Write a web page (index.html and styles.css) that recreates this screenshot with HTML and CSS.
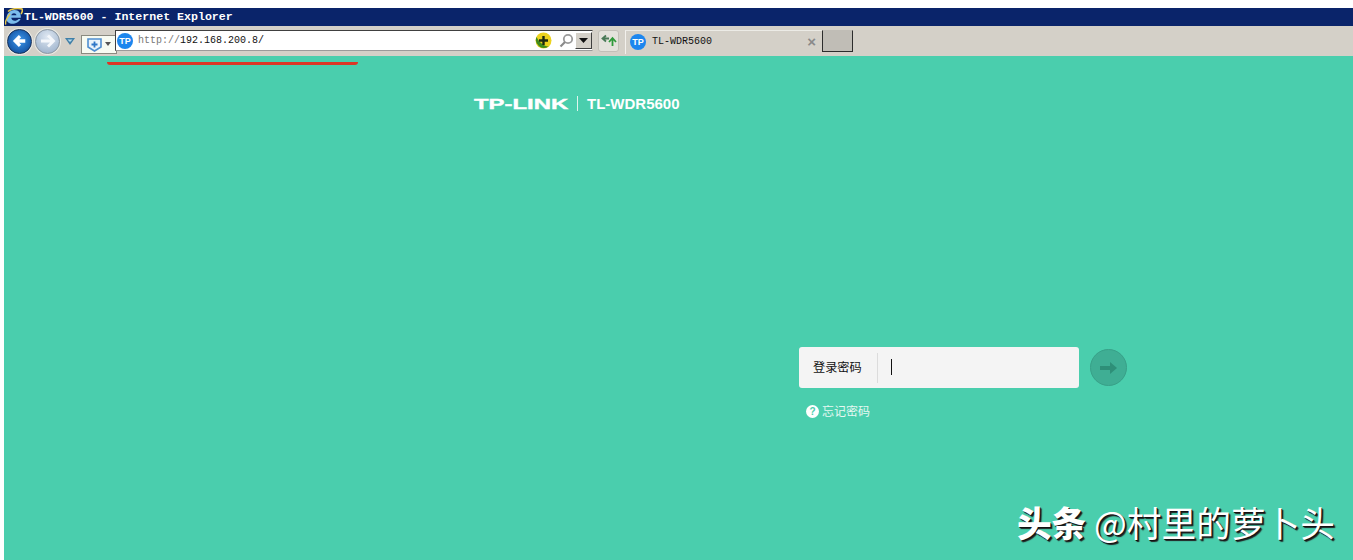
FILE: index.html
```html
<!DOCTYPE html>
<html lang="zh">
<head>
<meta charset="utf-8">
<title>TL-WDR5600</title>
<link rel="stylesheet" href="styles.css">
</head>
<body>
<div class="window">
  <header class="titlebar">
    <svg class="ie-logo" width="18" height="18" viewBox="0 0 18 18">
      <path d="M3 3.500C6 .5 13 0 17 1c1 2-.3 4-1 5" fill="none" stroke="#e8c84a" stroke-width="1.600"/>
      <path d="M1.500 10.500C1.500 5.500 5.500 2 9.500 2c4.300 0 6.800 3.300 6.300 7.800H6.300c.2 3.200 4.700 4.200 7.300 1.200h2C13 17 1.500 18 1.500 10.500zM6.300 7.300h5.200C11.200 4.600 6.800 4.600 6.300 7.300z" fill="#7bbcec" fill-rule="evenodd"/>
      <path d="M1 16.500c-1.500-2 1-7 4-10.500" fill="none" stroke="#e8c84a" stroke-width="1.400"/>
    </svg>
    <span class="title-text">TL-WDR5600 - Internet Explorer</span>
  </header>
  <nav class="toolbar">
    <button class="nav-btn back" aria-label="后退">
      <svg width="24" height="24" viewBox="0 0 24 24"><path d="M18 12H8M12.500 7L7.500 12l5 5" fill="none" stroke="#fff" stroke-width="3.400"/></svg>
    </button>
    <button class="nav-btn forward" aria-label="前进">
      <svg width="22" height="22" viewBox="0 0 22 22"><path d="M4 11h12M11 5.500l5.500 5.500-5.500 5.500" fill="none" stroke="#f4f7fb" stroke-width="2.800"/></svg>
    </button>
    <svg class="recent" width="10" height="7" viewBox="0 0 10 7"><path d="M0 0h10L5 7z" fill="#3f7fa8"/><path d="M2.500 1.500h5L5 4z" fill="#b9dcec"/></svg>
    <div class="compat">
      <svg width="15" height="15" viewBox="0 0 15 15"><path d="M1 2h13v8l-6.500 4L1 10z" fill="#eaf3fb" stroke="#4f8fd0" stroke-width="1.600"/><path d="M7.500 4.500v6M4.500 7.500h6" stroke="#2f77c8" stroke-width="1.800"/></svg>
      <svg class="caret-small" width="6" height="4" viewBox="0 0 6 4"><path d="M0 0h6L3 4z" fill="#555"/></svg>
    </div>
    <div class="address">
      <span class="tp-badge">TP</span>
      <span class="url"><span class="proto">http://</span>192.168.200.8/</span>
      <svg class="shield" width="17" height="17" viewBox="0 0 17 17"><circle cx="8.500" cy="8.500" r="8" fill="#ecd21e"/><path d="M1.500 5a8 8 0 0 0 12 9.500C9 14 4.500 11 1.500 5z" fill="#3f8a1c"/><path d="M8.500 4v9M4 8.500h9" stroke="#1c2a10" stroke-width="2.400"/></svg>
      <svg class="search" width="15" height="15" viewBox="0 0 15 15"><circle cx="9" cy="6" r="4.200" fill="none" stroke="#9a9a9a" stroke-width="1.800"/><path d="M6 9l-4.500 4.500" stroke="#8a8a8a" stroke-width="2.200"/></svg>
      <span class="dropdown"><svg width="9" height="5" viewBox="0 0 9 5"><path d="M0 0h9L4.500 5z" fill="#111"/></svg></span>
    </div>
    <button class="refresh" aria-label="刷新">
      <svg width="18" height="14" viewBox="0 0 18 14"><path d="M9 4.500H3.500M6 1.500L2.500 4.500 6 7.500" fill="none" stroke="#4a7a58" stroke-width="1.800"/><path d="M12.500 12V5M16 8l-3.500-4L9 8" fill="none" stroke="#2f9a3a" stroke-width="1.800"/></svg>
    </button>
    <div class="tab">
      <span class="tp-badge">TP</span>
      <span class="tab-title">TL-WDR5600</span>
      <span class="tab-close">×</span>
    </div>
    <div class="new-tab"></div>
  </nav>
  <div class="red-line"></div>
  <main class="page">
    <div class="brand">
      <span class="brand-logo">TP-LINK</span>
      <span class="brand-sep"></span>
      <span class="brand-model">TL-WDR5600</span>
    </div>
    <section class="login">
      <div class="login-row">
        <div class="field">
          <span class="field-label">登录密码</span>
          <span class="field-sep"></span>
          <span class="cursor"></span>
        </div>
        <button class="go" aria-label="登录">
          <svg width="20" height="14" viewBox="0 0 20 14"><path d="M1 7h14" stroke="#2e8f78" stroke-width="4"/><path d="M11 1l7 6-7 6z" fill="#2e8f78"/></svg>
        </button>
      </div>
      <a class="forgot"><span class="help">?</span>忘记密码</a>
    </section>
    <footer class="watermark"><b>头条</b> @村里的萝卜头</footer>
  </main>
</div>
</body>
</html>
```
FILE: styles.css
```css
* { box-sizing: border-box; }
html, body { margin: 0; height: 100%; }
body { background: #fff; overflow: hidden; font-family: "Liberation Sans", "Noto Sans CJK SC", sans-serif; }
.window { position: relative; height: 560px; padding: 8px 0 0 4px; display: flex; flex-direction: column; }
.titlebar { height: 18px; background: #0a246a; display: flex; align-items: center; flex: none; }
.ie-logo { flex: none; margin: 0 1px 0 1px; }
.title-text { font: bold 11.6px/18px "Liberation Mono", monospace; color: #fff; white-space: nowrap; }
.toolbar { height: 30px; flex: none; background: #d4d0c8; display: flex; align-items: center; padding-left: 3px; }
button { padding: 0; font: inherit; }
.nav-btn { border-radius: 50%; display: flex; align-items: center; justify-content: center; flex: none; }
.back { width: 25px; height: 25px; background: radial-gradient(circle at 50% 45%, #3f9aee, #12509f 80%); border: 1px solid #16315c; box-shadow: 0 0 0 1px #e9e9e4; }
.forward { width: 25px; height: 25px; margin-left: 3px; background: radial-gradient(circle at 50% 30%, #dfe8f2, #9fb4cd 85%); border: 1px solid #8d99a6; box-shadow: 0 0 0 1px #e9e9e4; }
.recent { margin-left: 5px; flex: none; }
.compat { width: 36px; height: 19px; margin: 6px 0 0 6px; background: #f7fbf2; border: 1px solid #8a8a80; display: flex; align-items: center; padding-left: 5px; gap: 3px; flex: none; }
.address { width: 478px; height: 21px; margin: -1px 0 0 -2px; background: #fff; border: 1px solid; border-color: #404040 #d4d0c8 #9a9a9a #404040; display: flex; align-items: center; position: relative; flex: none; }
.address .tp-badge { margin-left: 1px; }
.tp-badge { width: 16px; height: 16px; border-radius: 50%; background: #1c86ee; color: #fff; font: bold 9px/16px "Liberation Sans", sans-serif; text-align: center; flex: none; }
.url { margin-left: 5px; font: 10px/16px "Liberation Mono", monospace; color: #111; white-space: nowrap; flex: 1; }
.proto { color: #777; }
.shield { flex: none; margin-right: 7px; }
.search { flex: none; margin-right: 1px; }
.dropdown { width: 17px; height: 17px; background: #d4d0c8; border: 1px solid; border-color: #fff #404040 #404040 #fff; display: flex; align-items: center; justify-content: center; flex: none; }
.refresh { width: 21px; height: 22px; margin-left: 5px; background: #e4e2dc; border: 1px solid #c2bfb8; border-radius: 3px; display: flex; align-items: center; justify-content: center; flex: none; }
.tab { width: 197px; height: 24px; margin: 1px 0 0 6px; border-left: 1px solid #f2f0ec; border-top: 1px solid #ecebe6; display: flex; align-items: center; padding-left: 4px; flex: none; }
.tab-title { margin-left: 6px; font: 10px/16px "Liberation Mono", monospace; color: #111; flex: 1; white-space: nowrap; }
.tab-close { font: bold 15px/16px "Liberation Sans", sans-serif; color: #8a8a8a; margin-right: 6px; }
.new-tab { width: 31px; height: 22px; background: #c0bdb6; border: 1px solid; border-color: #c0bdb6 #2c2c2c #2c2c2c #2c2c2c; flex: none; }
.red-line { position: absolute; left: 107px; top: 62px; width: 251px; height: 3px; background: #dc3626; border-radius: 0 0 3px 3px; z-index: 2; }
.page { flex: 1; background: #4acead; position: relative; padding-top: 39px; overflow: hidden; }
.brand { display: flex; align-items: center; height: 17px; margin-left: 470px; color: #fff; white-space: nowrap; }
.brand-logo { display: inline-block; width: 94px; font: bold 15.5px/17px "Liberation Sans", sans-serif; transform: scaleX(1.54); transform-origin: left center; -webkit-text-stroke: .4px #fff; }
.brand-sep { width: 1px; height: 15px; background: #dff5ee; margin: 0 9px; }
.brand-model { font: bold 15px/17px "Liberation Sans", sans-serif; }
.login { margin: 235px 0 0 795px; width: 340px; }
.login-row { display: flex; align-items: center; gap: 11px; }
.field { width: 280px; height: 41px; background: #f4f4f4; border-radius: 3px; display: flex; align-items: center; padding-left: 14px; flex: none; }
.field-label { width: 49px; margin-bottom: 1px; font: 12.2px/16px "Noto Sans CJK SC", sans-serif; color: #111; }
.field-sep { width: 1px; height: 30px; background: #dcdcdc; margin-left: 15px; }
.cursor { width: 1px; height: 16px; margin-bottom: 2px; background: #111; margin-left: 13px; }
.go { width: 37px; height: 37px; border-radius: 50%; background: #3fae94; border: 1px solid #38a088; display: flex; align-items: center; justify-content: center; flex: none; }
.forgot { display: flex; align-items: center; margin: 15px 0 0 7px; color: #e6f8f2; font: 12px/16px "Noto Sans CJK SC", sans-serif; }
.help { width: 13px; height: 13px; border-radius: 50%; background: #fff; color: #4acead; font: bold 10px/13px "Liberation Sans", sans-serif; text-align: center; margin-right: 3px; }
.watermark { position: absolute; right: 18px; bottom: 18px; font: 34.7px/40px "Noto Sans CJK SC", sans-serif; color: #fff; white-space: nowrap; text-shadow: 1px 1px 0 #111, 2px 2px 1px #222; }
.watermark b { font-weight: 900; }
```
